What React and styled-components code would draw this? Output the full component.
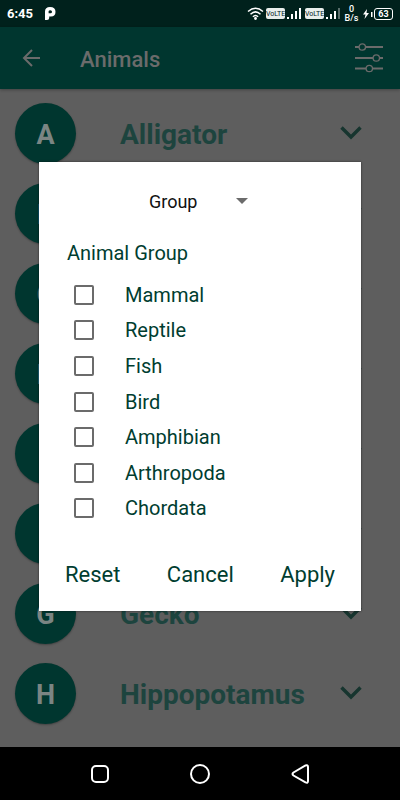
import React, { useState } from 'react';
import styled, { createGlobalStyle } from 'styled-components';

const GlobalStyle = createGlobalStyle`
  * {
    box-sizing: border-box;
  }

  body {
    margin: 0;
    font-family: Roboto, "Liberation Sans", sans-serif;
    background-color: #5e5e5e;
  }

  button, input, select {
    font-family: inherit;
  }
`;

const Page = styled.div`
  display: flex;
  flex-direction: column;
  min-height: 100vh;
`;

const StatusBar = styled.div`
  display: flex;
  align-items: center;
  justify-content: space-between;
  height: 27px;
  padding: 0 7px;
  background-color: #00211c;
  color: #fff;
`;

const StatusGroup = styled.div`
  display: flex;
  align-items: center;
  gap: ${({ $gap }) => $gap}px;
`;

const Clock = styled.span`
  font-size: 13px;
  font-weight: 700;
  line-height: 16px;
`;

const Volte = styled.span`
  width: 19px;
  height: 11px;
  border-radius: 2px;
  background-color: #e9eeec;
  color: #00211c;
  font-size: 7px;
  line-height: 12px;
  text-align: center;
`;

const Speed = styled.span`
  display: flex;
  flex-direction: column;
  align-items: center;
  width: 15px;
  font-size: 9px;
  font-weight: 500;
  line-height: 9px;
`;

const Battery = styled.span`
  width: 19px;
  height: 12px;
  border: 1px solid #fff;
  border-radius: 3px;
  font-size: 9px;
  font-weight: 700;
  line-height: 10px;
  text-align: center;
`;

const Screen = styled.main`
  position: relative;
  flex: 1;
  display: flex;
  flex-direction: column;
`;

const AppBar = styled.header`
  display: flex;
  align-items: center;
  height: 62px;
  padding: 0 16px 0 20px;
  background-color: #00362f;
  box-shadow: 0 1px 3px rgba(0, 0, 0, 0.3);
`;

const IconButton = styled.button`
  display: flex;
  padding: 0;
  border: none;
  background: none;
  color: ${({ $color }) => $color};
  cursor: pointer;
`;

const Title = styled.h1`
  flex: 1;
  margin: 0 0 0 38px;
  padding-top: 3px;
  font-size: 22px;
  font-weight: 500;
  line-height: 28px;
  color: #6b6b6b;
`;

const AnimalList = styled.ul`
  flex: 1;
  margin: 0;
  padding: 4px 0 0;
  list-style: none;
`;

const AnimalRow = styled.li`
  display: flex;
  align-items: center;
  height: 80px;
  padding: 0 37px 0 15px;
`;

const Avatar = styled.span`
  width: 61px;
  height: 61px;
  border-radius: 50%;
  background-color: #00362f;
  box-shadow: 0 1px 2px rgba(0, 0, 0, 0.3);
  color: #7b8583;
  font-size: 27px;
  font-weight: 700;
  line-height: 64px;
  text-align: center;
`;

const AnimalName = styled.span`
  flex: 1;
  margin-left: 44px;
  padding-top: 4px;
  font-size: 28px;
  font-weight: 700;
  line-height: 32px;
  color: #1d443e;
`;

const Overlay = styled.div`
  position: absolute;
  inset: 0;
  display: flex;
  align-items: center;
  padding: 0 39px 1px;
`;

const Dialog = styled.form`
  flex: 1;
  display: flex;
  flex-direction: column;
  padding: 27px 26px 20px;
  background-color: #fff;
  box-shadow: 0 0 2px rgba(0, 0, 0, 0.6);
`;

const SelectBox = styled.div`
  display: grid;
  align-items: center;
  align-self: center;
  width: 102px;

  & > * {
    grid-area: 1 / 1;
  }

  svg {
    justify-self: end;
    margin-right: 3px;
    pointer-events: none;
  }
`;

const Select = styled.select`
  appearance: none;
  width: 100%;
  height: 24px;
  padding: 0;
  border: none;
  background: none;
  font-size: 18px;
  color: #111;
`;

const Groups = styled.fieldset`
  display: flex;
  flex-direction: column;
  min-width: 0;
  margin: 28px 0 0;
  padding: 0;
  border: none;
`;

const Legend = styled.legend`
  padding: 0 0 0 2px;
  font-size: 20px;
  line-height: 24px;
  color: #003d30;
`;

const Options = styled.div`
  display: flex;
  flex-direction: column;
  height: 249px;
  margin-top: 12px;
`;

const Option = styled.label`
  flex: 1;
  display: flex;
  align-items: center;
  gap: 31px;
  padding-left: 9px;
  font-size: 20px;
  line-height: 24px;
  color: #003d30;
`;

const Checkbox = styled.input`
  appearance: none;
  width: 20px;
  height: 20px;
  margin: 0;
  border: 2px solid #6b6b6b;
  border-radius: 2px;

  &:checked {
    background-color: #00362f;
  }
`;

const Actions = styled.div`
  display: flex;
  justify-content: space-between;
  margin-top: 33px;
`;

const ActionButton = styled.button`
  height: 32px;
  padding: 0;
  border: none;
  background: none;
  font-size: 22px;
  line-height: 32px;
  color: #003d30;
  cursor: pointer;
`;

const NavBar = styled.nav`
  display: flex;
  align-items: center;
  justify-content: center;
  gap: 72px;
  height: 53px;
  background-color: #000;
`;

const ParkingIcon = () => (
  <svg width="11" height="13" viewBox="0 0 11 13">
    <path
      fill="#fff"
      fillRule="evenodd"
      d="M0 4.5Q0 0 5 0Q10.500 0 10.500 4.700Q10.500 9.500 6 9.500H4.200V11Q4.200 13 2 13H0ZM3.600 4.200V6.200H5.600Q7 6.200 7 4.700Q7 3.200 5.400 3.200Q3.600 3.200 3.600 4.200Z"
    />
  </svg>
);

const WifiIcon = () => (
  <svg width="17" height="13" viewBox="0 0 17 13" fill="none" stroke="#fff" strokeWidth="1.500">
    <path d="M1 4.500Q8.500 -2 16 4.500M3.500 7.200Q8.500 2.600 13.500 7.200M5.900 9.700Q8.500 7.200 11.100 9.700" />
    <circle cx="8.500" cy="11.500" r="0.700" fill="#fff" />
  </svg>
);

const SignalIcon = ({ weak }) => (
  <svg width="14" height="12" viewBox="0 0 14 12" fill="#fff">
    <rect x="0" y="9" width="2" height="2" />
    <rect x="4" y="6" width="2" height="5" />
    <rect x="8" y="3" width="2" height="8" />
    <rect x="12" y="0" width="2" height="11" opacity={weak ? 0.35 : 1} />
  </svg>
);

const ChargeIcon = () => (
  <svg width="10" height="10" viewBox="0 0 10 10" fill="#fff">
    <path d="M4 0L0 5.500H2.500L1.500 10L6 4H3.500Z" />
    <rect x="8" y="3" width="1.500" height="5" />
  </svg>
);

const BackArrow = () => (
  <svg width="22" height="22" viewBox="0 0 22 22" fill="none" stroke="currentColor" strokeWidth="2">
    <path d="M20 11H4M12 3L4 11L12 19" />
  </svg>
);

const SlidersIcon = () => (
  <svg width="30" height="30" viewBox="0 0 30 30" fill="none" stroke="currentColor">
    <path strokeWidth="2" d="M1 4H5M12 4H29M1 15H19M26 15H29M1 25.500H12M19 25.500H29" />
    <g strokeWidth="1.300">
      <circle cx="8.300" cy="4" r="3.200" />
      <circle cx="22.300" cy="15" r="3.200" />
      <circle cx="15.300" cy="25.500" r="3.200" />
    </g>
  </svg>
);

const ChevronIcon = () => (
  <svg width="24" height="16" viewBox="0 0 24 16" fill="none" stroke="currentColor" strokeWidth="3.400">
    <path d="M2.500 2.500L12 12L21.500 2.500" />
  </svg>
);

const animals = [
  { initial: 'A', name: 'Alligator' },
  { initial: 'B' },
  { initial: 'C' },
  { initial: 'D' },
  { initial: 'E' },
  { initial: 'F' },
  { initial: 'G', name: 'Gecko' },
  { initial: 'H', name: 'Hippopotamus' },
];

const groups = ['Mammal', 'Reptile', 'Fish', 'Bird', 'Amphibian', 'Arthropoda', 'Chordata'];

const FilterDialog = () => {
  const [selected, setSelected] = useState([]);

  const toggle = (group) => {
    setSelected((prev) =>
      prev.includes(group) ? prev.filter((g) => g !== group) : [...prev, group]
    );
  };

  return (
    <Overlay>
      <Dialog role="dialog" aria-label="Filter" onSubmit={(e) => e.preventDefault()}>
        <SelectBox>
          <Select aria-label="Filter by">
            <option>Group</option>
          </Select>
          <svg width="12" height="6" viewBox="0 0 12 6">
            <path d="M0 0H12L6 6Z" fill="#6b6b6b" />
          </svg>
        </SelectBox>

        <Groups>
          <Legend>Animal Group</Legend>
          <Options>
            {groups.map((group) => (
              <Option key={group}>
                <Checkbox
                  type="checkbox"
                  checked={selected.includes(group)}
                  onChange={() => toggle(group)}
                />
                {group}
              </Option>
            ))}
          </Options>
        </Groups>

        <Actions>
          <ActionButton type="button" onClick={() => setSelected([])}>Reset</ActionButton>
          <ActionButton type="button">Cancel</ActionButton>
          <ActionButton type="submit">Apply</ActionButton>
        </Actions>
      </Dialog>
    </Overlay>
  );
};

const App = () => (
  <Page>
    <GlobalStyle />
    <StatusBar>
      <StatusGroup $gap={12}>
        <Clock>6:45</Clock>
        <ParkingIcon />
      </StatusGroup>
      <StatusGroup $gap={4}>
        <StatusGroup $gap={2}>
          <WifiIcon />
          <Volte>VoLTE</Volte>
          <SignalIcon />
        </StatusGroup>
        <StatusGroup $gap={2}>
          <Volte>VoLTE</Volte>
          <SignalIcon weak />
        </StatusGroup>
        <Speed>
          <span>0</span>
          <span>B/s</span>
        </Speed>
        <StatusGroup $gap={1}>
          <ChargeIcon />
          <Battery>63</Battery>
        </StatusGroup>
      </StatusGroup>
    </StatusBar>

    <Screen>
      <AppBar>
        <IconButton $color="#6b6b6b" aria-label="Back">
          <BackArrow />
        </IconButton>
        <Title>Animals</Title>
        <IconButton $color="#6b6b6b" aria-label="Filter">
          <SlidersIcon />
        </IconButton>
      </AppBar>

      <AnimalList>
        {animals.map(({ initial, name }) => (
          <AnimalRow key={initial}>
            <Avatar>{initial}</Avatar>
            <AnimalName>{name}</AnimalName>
            <IconButton $color="#17352f" aria-label="Expand">
              <ChevronIcon />
            </IconButton>
          </AnimalRow>
        ))}
      </AnimalList>

      <FilterDialog />
    </Screen>

    <NavBar>
      <IconButton $color="#fff" aria-label="Recent apps">
        <svg width="28" height="28" viewBox="0 0 28 28" fill="none" stroke="currentColor" strokeWidth="2">
          <rect x="6" y="6" width="16" height="16" rx="4" />
        </svg>
      </IconButton>
      <IconButton $color="#fff" aria-label="Home">
        <svg width="28" height="28" viewBox="0 0 28 28" fill="none" stroke="currentColor" strokeWidth="2">
          <circle cx="14" cy="14" r="9" />
        </svg>
      </IconButton>
      <IconButton $color="#fff" aria-label="Go back">
        <svg width="28" height="28" viewBox="0 0 28 28" fill="none" stroke="currentColor" strokeWidth="2">
          <path d="M19.500 5.500Q22 4.500 22 7V21Q22 23.500 19.500 22.300L7.500 15.500Q5.500 14 7.500 12.500Z" />
        </svg>
      </IconButton>
    </NavBar>
  </Page>
);

export default App;
